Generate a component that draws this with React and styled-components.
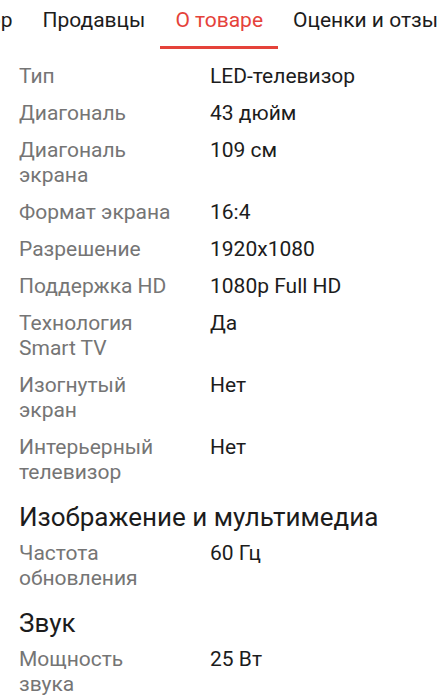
import React from "react";
import styled, { createGlobalStyle } from "styled-components";

const Global = createGlobalStyle`
  body {
    margin: 0;
    background: #fff;
    font-family: Roboto, "Noto Sans", sans-serif;
  }
`;

const Page = styled.div`
  width: 439px;
  height: 700px;
  overflow: hidden;
`;

const TabBar = styled.div`
  overflow: hidden;
  white-space: nowrap;
`;

const TabStrip = styled.div`
  display: flex;
  margin-left: ${props => props.offset}px;
`;

const Tab = styled.div`
  flex: none;
  padding: 8px 15px 0;
  height: 49px;
  box-sizing: border-box;
  font-size: 21px;
  line-height: 25px;
  color: ${props => (props.active ? "#e5423a" : "#1c1c1c")};
  border-bottom: 3px solid ${props => (props.active ? "#e5423a" : "transparent")};
`;

const Content = styled.div`
  padding: 15px 19px 0;
`;

const Rows = styled.div`
  display: flex;
  flex-direction: column;
  gap: 12px;
`;

const Row = styled.div`
  display: grid;
  grid-template-columns: 191px 1fr;
  font-size: 21px;
  line-height: 25px;
`;

const Label = styled.div`
  color: #757575;
  padding-right: 31px;
`;

const Value = styled.div`
  color: #1c1c1c;
`;

const Heading = styled.h2`
  margin: 17px 0 9px;
  font-size: 26px;
  font-weight: 400;
  line-height: 30px;
  color: #1c1c1c;
`;

const tabs = ["Обзор", "Продавцы", "О товаре", "Оценки и отзывы"];

const general = [
  ["Тип", "LED-телевизор"],
  ["Диагональ", "43 дюйм"],
  ["Диагональ экрана", "109 см"],
  ["Формат экрана", "16:4"],
  ["Разрешение", "1920x1080"],
  ["Поддержка HD", "1080p Full HD"],
  ["Технология Smart TV", "Да"],
  ["Изогнутый экран", "Нет"],
  ["Интерьерный телевизор", "Нет"],
];

const sections = [
  { title: "Изображение и мультимедиа", rows: [["Частота обновления", "60 Гц"]] },
  { title: "Звук", rows: [["Мощность звука", "25 Вт"]] },
];

function SpecRows({ rows }) {
  return (
    <Rows>
      {rows.map(([k, v]) => (
        <Row key={k}>
          <Label>{k}</Label>
          <Value>{v}</Value>
        </Row>
      ))}
    </Rows>
  );
}

export default function App() {
  return (
    <Page>
      <Global />
      <TabBar>
        <TabStrip offset={-63}>
          {tabs.map(t => (
            <Tab key={t} active={t === "О товаре"}>{t}</Tab>
          ))}
        </TabStrip>
      </TabBar>
      <Content>
        <SpecRows rows={general} />
        {sections.map(s => (
          <div key={s.title}>
            <Heading>{s.title}</Heading>
            <SpecRows rows={s.rows} />
          </div>
        ))}
      </Content>
    </Page>
  );
}
